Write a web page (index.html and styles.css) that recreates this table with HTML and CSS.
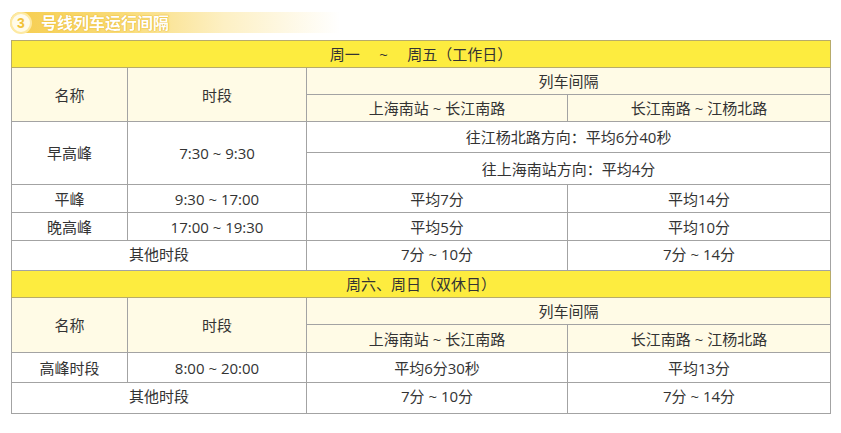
FILE: index.html
```html
<!DOCTYPE html>
<html lang="zh-CN">
<head>
<meta charset="utf-8">
<link rel="stylesheet" href="styles.css">
</head>
<body>
<div class="page">
  <div class="banner">
    <span class="num">3</span>
    <span class="title">号线列车运行间隔</span>
  </div>
  <table class="sched">
    <colgroup>
      <col class="c1"><col class="c2"><col class="c3"><col class="c4">
    </colgroup>
    <tr class="h27 yellow"><td colspan="4">周一&nbsp;&nbsp;&nbsp;&nbsp;&nbsp;~&nbsp;&nbsp;&nbsp;&nbsp;&nbsp;周五（工作日）</td></tr>
    <tr class="h27 cream"><td rowspan="2">名称</td><td rowspan="2">时段</td><td colspan="2">列车间隔</td></tr>
    <tr class="h27 cream"><td>上海南站 ~ 长江南路</td><td>长江南路 ~ 江杨北路</td></tr>
    <tr class="h31"><td rowspan="2">早高峰</td><td rowspan="2">7:30 ~ 9:30</td><td colspan="2">往江杨北路方向：平均6分40秒</td></tr>
    <tr class="h32"><td colspan="2">往上海南站方向：平均4分</td></tr>
    <tr class="h28"><td>平峰</td><td>9:30 ~ 17:00</td><td>平均7分</td><td>平均14分</td></tr>
    <tr class="h28"><td>晚高峰</td><td>17:00 ~ 19:30</td><td>平均5分</td><td>平均10分</td></tr>
    <tr class="h30 top"><td colspan="2">其他时段</td><td>7分 ~ 10分</td><td>7分 ~ 14分</td></tr>
    <tr class="h27 yellow"><td colspan="4">周六、周日（双休日）</td></tr>
    <tr class="h27 cream"><td rowspan="2">名称</td><td rowspan="2">时段</td><td colspan="2">列车间隔</td></tr>
    <tr class="h28 cream"><td>上海南站 ~ 长江南路</td><td>长江南路 ~ 江杨北路</td></tr>
    <tr class="h30"><td>高峰时段</td><td>8:00 ~ 20:00</td><td>平均6分30秒</td><td>平均13分</td></tr>
    <tr class="h31 top"><td colspan="2">其他时段</td><td>7分 ~ 10分</td><td>7分 ~ 14分</td></tr>
  </table>
</div>
</body>
</html>
```
FILE: styles.css
```css
html, body {
  margin: 0;
  padding: 0;
  background: #ffffff;
}
.page {
  padding: 12px 0 0 10px;
  font-family: "Open Sans", "Noto Sans CJK SC", sans-serif;
  color: #333333;
}
.banner {
  display: flex;
  align-items: center;
  gap: 9px;
  width: 330px;
  height: 21px;
  border-radius: 11px 0 0 11px;
  background: linear-gradient(to right, #f6cd4f 0%, #f9dc7a 35%, #fdf0c4 65%, #ffffff 100%);
}
.num {
  width: 18px;
  height: 18px;
  margin-left: 0;
  border-radius: 50%;
  background: #fffbea;
  border: 2px solid #fde9a2;
  color: #f2c238;
  font-size: 14px;
  font-weight: bold;
  line-height: 18px;
  text-align: center;
  font-family: "Liberation Sans", sans-serif;
}
.title {
  font-family: "Noto Sans CJK SC", sans-serif;
  font-size: 16px;
  font-weight: bold;
  color: #ffffff;
  line-height: 21px;
  text-shadow: 0 0 1px #e8b830, 0 0 1px #e8b830, 0 0 2px #f0c850;
}
.sched {
  margin: 7px 0 0 1px;
  border-collapse: collapse;
  table-layout: fixed;
  width: 819px;
  font-size: 15px;
}
.c1 { width: 116px; }
.c2 { width: 179px; }
.c3 { width: 261px; }
.c4 { width: 263px; }
.sched td {
  border: 1px solid #a3a3a3;
  text-align: center;
  vertical-align: middle;
  padding: 0;
  line-height: 18px;
}
.h27 { height: 27px; }
.h28 { height: 28px; }
.h30 { height: 30px; }
.h31 { height: 31px; }
.h32 { height: 32px; }
.yellow td {
  background: #fdec3f;
  border-color: #b7ab6a;
}
.cream td { background: #fffbe6; }
.top td { vertical-align: top; padding-top: 4px; }
```
